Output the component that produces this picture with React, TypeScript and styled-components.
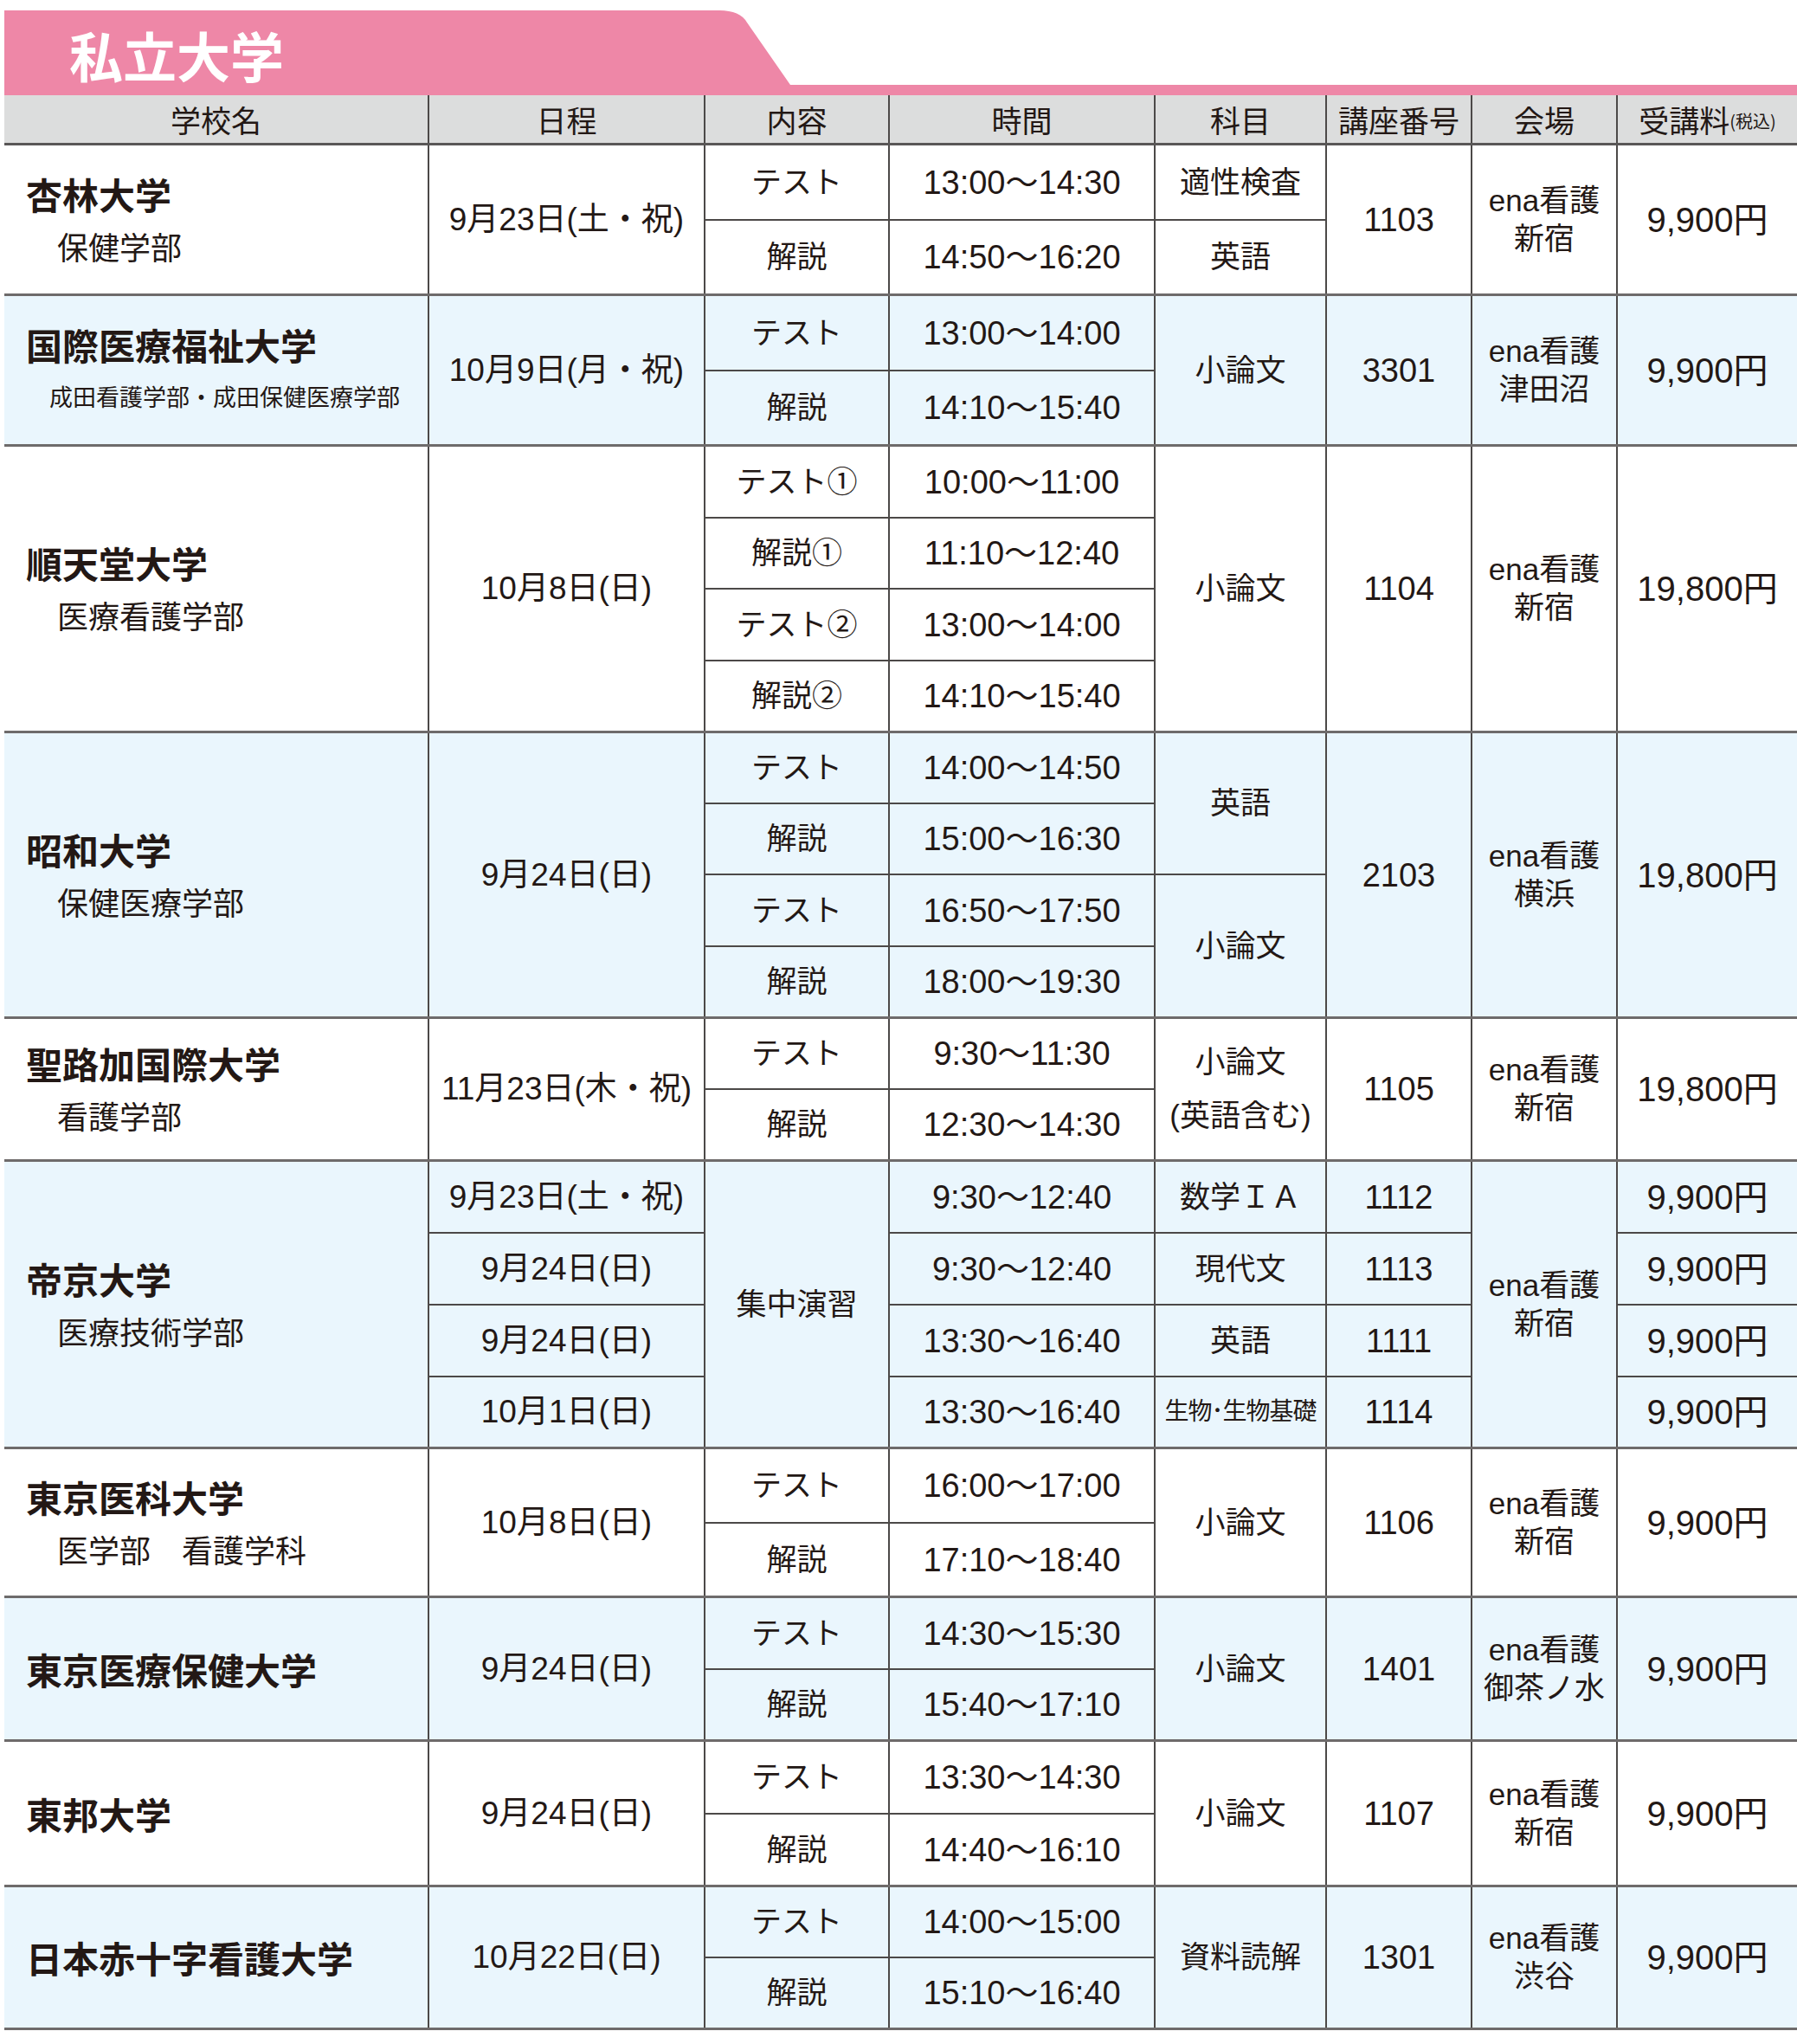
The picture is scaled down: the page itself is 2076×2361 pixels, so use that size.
import React, { FC, ReactNode } from "react";
import styled, { createGlobalStyle } from "styled-components";

const PINK = "#ee87a7";
const LINE = "#4c4948";
const BLUE = "#eaf6fd";
const COLS = "489px 317px 211px 305px 196px 166px 166px 207px";

const GlobalStyle = createGlobalStyle`
  html, body {
    margin: 0;
    padding: 0;
    background: #ffffff;
  }
  body {
    font-family: "Liberation Sans", "Noto Sans CJK JP", sans-serif;
    color: #231815;
  }
`;

const Page = styled.div`
  width: 2076px;
  min-height: 2361px;
  box-sizing: border-box;
  padding: 12px 0 0 5px;
`;

const TitleTab = styled.div`
  width: 910px;
  height: 86px;
  box-sizing: border-box;
  padding: 16px 0 0 75px;
  background: ${PINK};
  clip-path: path("M0 0 H826 Q850 0 858 14 L908 86 H0 Z");
  display: flex;
  align-items: center;
`;

const Title = styled.h1`
  margin: 0;
  font-family: "Noto Sans CJK JP", sans-serif;
  font-size: 62px;
  font-weight: 700;
  line-height: 1;
  color: #ffffff;
`;

const Stripe = styled.div`
  height: 12px;
  background: ${PINK};
`;

const HeaderRow = styled.div`
  display: grid;
  grid-template-columns: ${COLS};
  grid-template-rows: 55px;
  column-gap: 2px;
  background: ${LINE};
  border-bottom: 3px solid #595757;
`;

const HeadCell = styled.div`
  background: #dcdddd;
  display: flex;
  align-items: center;
  justify-content: center;
  font-family: "Noto Sans CJK JP", sans-serif;
  font-size: 35px;
  line-height: 1;
`;

const TaxNote = styled.span`
  font-size: 20px;
  margin-top: 4px;
`;

const Block = styled.div<{ $rows: number[] }>`
  display: grid;
  grid-template-columns: ${COLS};
  grid-template-rows: ${(p) => p.$rows.map((r) => `${r}px`).join(" ")};
  gap: 2px;
  background: ${LINE};
  border-bottom: 3px solid #6e6b6b;
`;

type Kind = "jp" | "date" | "time" | "num" | "price" | "small";

const sizes: Record<Kind, number> = {
  jp: 35,
  date: 37,
  time: 38,
  num: 38,
  price: 40,
  small: 28,
};

const Cell = styled.div<{ $blue: boolean; $span: number; $kind: Kind; $lh: number }>`
  grid-row: span ${(p) => p.$span};
  background: ${(p) => (p.$blue ? BLUE : "#ffffff")};
  display: flex;
  align-items: center;
  justify-content: center;
  text-align: center;
  font-size: ${(p) => sizes[p.$kind]}px;
  letter-spacing: ${(p) => (p.$kind === "small" ? "-1px" : "normal")};
  line-height: ${(p) => p.$lh}px;
  white-space: pre-line;
`;

const NameCell = styled.div<{ $blue: boolean; $span: number }>`
  grid-row: span ${(p) => p.$span};
  background: ${(p) => (p.$blue ? BLUE : "#ffffff")};
  display: flex;
  flex-direction: column;
  justify-content: center;
  padding-left: 25px;
`;

const SchoolName = styled.div`
  font-family: "Noto Sans CJK JP", sans-serif;
  font-size: 42px;
  font-weight: 700;
  line-height: 60px;
`;

const Faculty = styled.div<{ $small?: boolean }>`
  font-family: "Noto Sans CJK JP", sans-serif;
  font-size: ${(p) => (p.$small ? 27 : 36)}px;
  line-height: 60px;
  padding-left: 1em;
`;

type C = { t: ReactNode; k?: Kind; s?: number; lh?: number };

type Uni = {
  name: string;
  faculty?: string;
  smallFaculty?: boolean;
  rows: number[];
  cells: C[];
};

const T = "テスト";
const K = "解説";

const unis: Uni[] = [
  {
    name: "杏林大学",
    faculty: "保健学部",
    rows: [85, 84],
    cells: [
      { t: "9月23日(土・祝)", k: "date", s: 2 },
      { t: T },
      { t: "13:00〜14:30", k: "time" },
      { t: "適性検査" },
      { t: "1103", k: "num", s: 2 },
      { t: "ena看護\n新宿", s: 2, lh: 44 },
      { t: "9,900円", k: "price", s: 2 },
      { t: K },
      { t: "14:50〜16:20", k: "time" },
      { t: "英語" },
    ],
  },
  {
    name: "国際医療福祉大学",
    faculty: "成田看護学部・成田保健医療学部",
    smallFaculty: true,
    rows: [85, 84],
    cells: [
      { t: "10月9日(月・祝)", k: "date", s: 2 },
      { t: T },
      { t: "13:00〜14:00", k: "time" },
      { t: "小論文", s: 2 },
      { t: "3301", k: "num", s: 2 },
      { t: "ena看護\n津田沼", s: 2, lh: 44 },
      { t: "9,900円", k: "price", s: 2 },
      { t: K },
      { t: "14:10〜15:40", k: "time" },
    ],
  },
  {
    name: "順天堂大学",
    faculty: "医療看護学部",
    rows: [81, 80, 81, 80],
    cells: [
      { t: "10月8日(日)", k: "date", s: 4 },
      { t: "テスト①" },
      { t: "10:00〜11:00", k: "time" },
      { t: "小論文", s: 4 },
      { t: "1104", k: "num", s: 4 },
      { t: "ena看護\n新宿", s: 4, lh: 44 },
      { t: "19,800円", k: "price", s: 4 },
      { t: "解説①" },
      { t: "11:10〜12:40", k: "time" },
      { t: "テスト②" },
      { t: "13:00〜14:00", k: "time" },
      { t: "解説②" },
      { t: "14:10〜15:40", k: "time" },
    ],
  },
  {
    name: "昭和大学",
    faculty: "保健医療学部",
    rows: [80, 80, 81, 80],
    cells: [
      { t: "9月24日(日)", k: "date", s: 4 },
      { t: T },
      { t: "14:00〜14:50", k: "time" },
      { t: "英語", s: 2 },
      { t: "2103", k: "num", s: 4 },
      { t: "ena看護\n横浜", s: 4, lh: 44 },
      { t: "19,800円", k: "price", s: 4 },
      { t: K },
      { t: "15:00〜16:30", k: "time" },
      { t: T },
      { t: "16:50〜17:50", k: "time" },
      { t: "小論文", s: 2 },
      { t: K },
      { t: "18:00〜19:30", k: "time" },
    ],
  },
  {
    name: "聖路加国際大学",
    faculty: "看護学部",
    rows: [80, 80],
    cells: [
      { t: "11月23日(木・祝)", k: "date", s: 2 },
      { t: T },
      { t: "9:30〜11:30", k: "time" },
      { t: "小論文\n(英語含む)", s: 2, lh: 62 },
      { t: "1105", k: "num", s: 2 },
      { t: "ena看護\n新宿", s: 2, lh: 44 },
      { t: "19,800円", k: "price", s: 2 },
      { t: K },
      { t: "12:30〜14:30", k: "time" },
    ],
  },
  {
    name: "帝京大学",
    faculty: "医療技術学部",
    rows: [81, 81, 81, 80],
    cells: [
      { t: "9月23日(土・祝)", k: "date" },
      { t: "集中演習", s: 4 },
      { t: "9:30〜12:40", k: "time" },
      { t: "数学ＩＡ" },
      { t: "1112", k: "num" },
      { t: "ena看護\n新宿", s: 4, lh: 44 },
      { t: "9,900円", k: "price" },
      { t: "9月24日(日)", k: "date" },
      { t: "9:30〜12:40", k: "time" },
      { t: "現代文" },
      { t: "1113", k: "num" },
      { t: "9,900円", k: "price" },
      { t: "9月24日(日)", k: "date" },
      { t: "13:30〜16:40", k: "time" },
      { t: "英語" },
      { t: "1111", k: "num" },
      { t: "9,900円", k: "price" },
      { t: "10月1日(日)", k: "date" },
      { t: "13:30〜16:40", k: "time" },
      { t: "生物･生物基礎", k: "small" },
      { t: "1114", k: "num" },
      { t: "9,900円", k: "price" },
    ],
  },
  {
    name: "東京医科大学",
    faculty: "医学部　看護学科",
    rows: [84, 83],
    cells: [
      { t: "10月8日(日)", k: "date", s: 2 },
      { t: T },
      { t: "16:00〜17:00", k: "time" },
      { t: "小論文", s: 2 },
      { t: "1106", k: "num", s: 2 },
      { t: "ena看護\n新宿", s: 2, lh: 44 },
      { t: "9,900円", k: "price", s: 2 },
      { t: K },
      { t: "17:10〜18:40", k: "time" },
    ],
  },
  {
    name: "東京医療保健大学",
    rows: [81, 80],
    cells: [
      { t: "9月24日(日)", k: "date", s: 2 },
      { t: T },
      { t: "14:30〜15:30", k: "time" },
      { t: "小論文", s: 2 },
      { t: "1401", k: "num", s: 2 },
      { t: "ena看護\n御茶ノ水", s: 2, lh: 44 },
      { t: "9,900円", k: "price", s: 2 },
      { t: K },
      { t: "15:40〜17:10", k: "time" },
    ],
  },
  {
    name: "東邦大学",
    rows: [82, 81],
    cells: [
      { t: "9月24日(日)", k: "date", s: 2 },
      { t: T },
      { t: "13:30〜14:30", k: "time" },
      { t: "小論文", s: 2 },
      { t: "1107", k: "num", s: 2 },
      { t: "ena看護\n新宿", s: 2, lh: 44 },
      { t: "9,900円", k: "price", s: 2 },
      { t: K },
      { t: "14:40〜16:10", k: "time" },
    ],
  },
  {
    name: "日本赤十字看護大学",
    rows: [80, 80],
    cells: [
      { t: "10月22日(日)", k: "date", s: 2 },
      { t: T },
      { t: "14:00〜15:00", k: "time" },
      { t: "資料読解", s: 2 },
      { t: "1301", k: "num", s: 2 },
      { t: "ena看護\n渋谷", s: 2, lh: 44 },
      { t: "9,900円", k: "price", s: 2 },
      { t: K },
      { t: "15:10〜16:40", k: "time" },
    ],
  },
];

const headers = ["学校名", "日程", "内容", "時間", "科目", "講座番号", "会場"];

export const App: FC = () => {
  return (
    <Page>
      <GlobalStyle />
      <TitleTab>
        <Title>私立大学</Title>
      </TitleTab>
      <Stripe />
      <HeaderRow>
        {headers.map((h) => (
          <HeadCell key={h}>{h}</HeadCell>
        ))}
        <HeadCell>
          受講料<TaxNote>(税込)</TaxNote>
        </HeadCell>
      </HeaderRow>
      {unis.map((u, i) => {
        const blue = i % 2 === 1;
        return (
          <Block key={u.name} $rows={u.rows}>
            <NameCell $blue={blue} $span={u.rows.length}>
              <SchoolName>{u.name}</SchoolName>
              {u.faculty && <Faculty $small={u.smallFaculty}>{u.faculty}</Faculty>}
            </NameCell>
            {u.cells.map((c, j) => (
              <Cell
                key={j}
                $blue={blue}
                $span={c.s ?? 1}
                $kind={c.k ?? "jp"}
                $lh={c.lh ?? 44}
              >
                {c.t}
              </Cell>
            ))}
          </Block>
        );
      })}
    </Page>
  );
};

export default App;
